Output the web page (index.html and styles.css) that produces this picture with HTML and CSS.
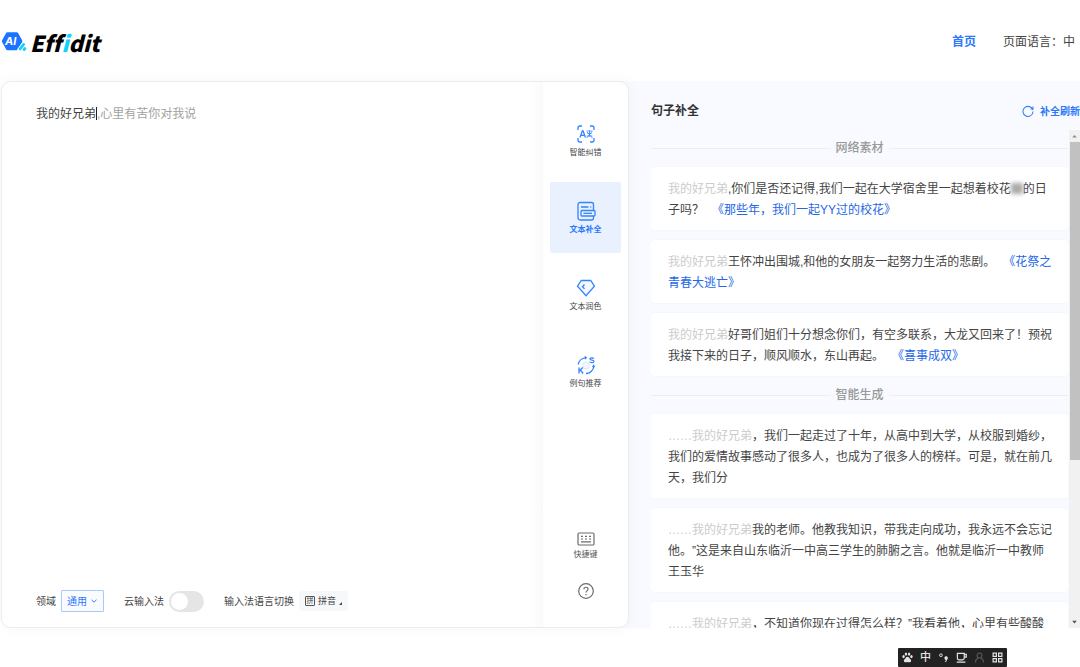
FILE: index.html
```html
<!DOCTYPE html>
<html lang="zh-CN">
<head>
<meta charset="utf-8">
<meta name="viewport" content="width=device-width, initial-scale=1">
<title>Effidit</title>
<link rel="stylesheet" href="styles.css">
</head>
<body>
<div class="page">
  <header class="topbar">
    <a class="brand" href="#" aria-label="Effidit">
      <svg class="brand-mark" viewBox="0 0 26 22" aria-hidden="true">
        <path d="M6.600 1.200h9q1 0 1.500.9l4 7.200q.5.9 0 1.800l-4 7.200q-.5.9-1.500.9h-9q-1 0-1.500-.9l-4-7.200q-.5-.9 0-1.800l4-7.200q.5-.9 1.500-.9z" fill="#1b74ff"/>
        <path d="M18.500 18.800l4.500-6" stroke="#fff" stroke-width="4.500" stroke-linecap="round"/>
        <path d="M19 18l3.600-4.600" stroke="#12d1fb" stroke-width="2.800" stroke-linecap="round"/>
        <path d="M23 18.500l.9-1" stroke="#12d1fb" stroke-width="2.800" stroke-linecap="round"/>
        <text class="brand-ai" x="4" y="14">AI</text>
      </svg>
      <span class="brand-name">Eff<span class="brand-i">i</span>dit</span>
    </a>
    <nav class="topnav">
      <a class="nav-home" href="#">首页</a>
      <a class="nav-lang" href="#">页面语言：中</a>
    </nav>
  </header>

  <main class="workspace">
    <section class="editor-card">
      <div class="editor">
        <div class="editor-text" role="textbox" aria-label="正文" aria-multiline="true" contenteditable="true" spellcheck="false">我的好兄弟<span class="caret"></span><span class="hint">,心里有苦你对我说</span></div>
        <div class="editor-options">
          <div class="option">
            <label for="domain">领域</label>
            <span class="select-wrap">
              <select id="domain"><option>通用</option></select>
              <svg class="chevron" viewBox="0 0 8 8" aria-hidden="true"><path d="M1.500 2.800L4 5.200l2.500-2.400" fill="none" stroke="#3c83f8"/></svg>
            </span>
          </div>
          <div class="option">
            <label for="cloud">云输入法</label>
            <input class="switch" id="cloud" type="checkbox" role="switch">
          </div>
          <div class="option">
            <label for="ime">输入法语言切换</label>
            <button class="ime-button" id="ime" type="button">
              <span class="ime-glyph">拼</span>拼音
              <svg class="corner" viewBox="0 0 4 4" aria-hidden="true"><path d="M4 0v4H0z" fill="#444"/></svg>
            </button>
          </div>
        </div>
      </div>

      <aside class="tools">
        <button class="tool" type="button">
          <svg class="tool-icon" viewBox="0 0 20 20" aria-hidden="true">
            <path d="M2 6V4q0-2 2-2h2M14 2h2q2 0 2 2v2M18 14v2q0 2-2 2h-2M6 18H4q-2 0-2-2v-2" class="stroke"/>
            <path d="M4 13.500l2.300-6.500h.8l2.300 6.500M5 11.300h3.500" class="stroke"/>
            <path d="M10.500 7h6M11.500 9.500h4M13.500 6.500v6M10.500 12h6M10.800 14l5.200-6.500M11 8l5.500 6" class="stroke thin"/>
          </svg>
          智能纠错
        </button>
        <button class="tool active" type="button">
          <svg class="tool-icon" viewBox="0 0 20 20" aria-hidden="true">
            <rect x="2" y="1.500" width="15.500" height="17.500" rx="2" class="stroke"/>
            <path d="M5 6h7.500M14.300 6h1" class="stroke"/>
            <rect x="5" y="9.500" width="14" height="5.500" rx="1" class="stroke filled"/>
            <path d="M7.500 12.300h8.500" class="stroke"/>
          </svg>
          文本补全
        </button>
        <button class="tool" type="button">
          <svg class="tool-icon" viewBox="0 0 20 20" aria-hidden="true">
            <path d="M5.300 2.500h9.400l3.800 5.700L10 17.800 1.500 8.200z" class="stroke soft"/>
            <path d="M8.500 6.500L6.500 8.700l2 2.200" class="stroke"/>
          </svg>
          文本润色
        </button>
        <button class="tool" type="button">
          <svg class="tool-icon" viewBox="0 0 20 20" aria-hidden="true">
            <circle cx="10" cy="10.500" r="3.500" fill="#f2f7ff" stroke="#d7e6ff"/>
            <path d="M2.200 9.500A8 8 0 0 1 9.500 2.800M17.800 11.500a8 8 0 0 1-7.800 7" class="stroke"/>
            <path d="M8.500.8l2.700 1.700-2 2.200zM15.800 12l2.100-2.700 1.300 3z" fill="#3483ff"/>
            <path d="M3 12.500v6M6.800 12.500L3.200 16M4.300 15l2.900 3.500" class="stroke"/>
            <path d="M17.800 3.700c-.3-1-3.800-1.300-3.800.3 0 1.500 4 .8 4 2.400 0 1.600-3.900 1.500-4.300.2" class="stroke"/>
          </svg>
          例句推荐
        </button>
        <div class="tools-foot">
          <button class="foot-tool" type="button">
            <svg class="foot-icon" viewBox="0 0 18 18" aria-hidden="true">
              <rect x="1" y="3" width="16" height="12" rx="1.300" class="stroke-gray"/>
              <path d="M4 6.300h2M8 6.300h2M12 6.300h2M4 9h2M8 9h2M12 9h2M4 11.900h10" class="stroke-gray"/>
            </svg>
            快捷键
          </button>
          <button class="foot-tool" type="button" aria-label="帮助">
            <svg class="foot-icon" viewBox="0 0 18 18" aria-hidden="true">
              <circle cx="9" cy="9" r="7.300" class="stroke-gray"/>
              <path d="M6.900 7.300c0-2.800 4.200-2.600 4.200-.2 0 1.500-2.100 1.600-2.100 3.400M9 12v1.300" class="stroke-gray"/>
            </svg>
          </button>
        </div>
      </aside>
    </section>

    <section class="results">
      <div class="results-head">
        <h2>句子补全</h2>
        <button class="refresh" type="button">
          <svg class="refresh-icon" viewBox="0 0 12 12" aria-hidden="true"><path d="M10.800 5A5 5 0 1 0 11 6.500M11 1.500V4H8.500" fill="none" stroke="#3c83f8" stroke-width="1.100"/></svg>
          补全刷新
        </button>
      </div>
      <div class="results-body">
        <div class="results-list">
          <h3 class="divider">网络素材</h3>
          <article class="card"><span class="prefix">我的好兄弟</span>,你们是否还记得,我们一起在大学宿舍里一起想着校花<span class="masked"></span>的日子吗？<a class="source" href="#">《那些年，我们一起YY过的校花》</a></article>
          <article class="card"><span class="prefix">我的好兄弟</span>王怀冲出围城,和他的女朋友一起努力生活的悲剧。<a class="source" href="#">《花祭之青春大逃亡》</a></article>
          <article class="card"><span class="prefix">我的好兄弟</span>好哥们姐们十分想念你们，有空多联系，大龙又回来了！预祝我接下来的日子，顺风顺水，东山再起。<a class="source" href="#">《喜事成双》</a></article>
          <h3 class="divider">智能生成</h3>
          <article class="card"><span class="prefix">……我的好兄弟</span>，我们一起走过了十年，从高中到大学，从校服到婚纱，我们的爱情故事感动了很多人，也成为了很多人的榜样。可是，就在前几天，我们分</article>
          <article class="card"><span class="prefix">……我的好兄弟</span>我的老师。他教我知识，带我走向成功，我永远不会忘记他。”这是来自山东临沂一中高三学生的肺腑之言。他就是临沂一中教师王玉华</article>
          <article class="card"><span class="prefix">……我的好兄弟</span>，不知道你现在过得怎么样？”我看着他，心里有些酸酸</article>
        </div>
        <div class="scrollbar" aria-hidden="true">
          <svg class="arrow" viewBox="0 0 12 12"><path d="M3.500 7.500L6 5l2.500 2.500z" fill="#8b8b8b"/></svg>
          <div class="track"><div class="thumb"></div></div>
          <svg class="arrow" viewBox="0 0 12 12"><path d="M3.500 4.500h5L6 7.500z" fill="#505050"/></svg>
        </div>
      </div>
    </section>
  </main>

  <div class="ime-bar">
    <svg viewBox="0 0 12 12" aria-hidden="true"><g fill="#e4e4e4"><ellipse cx="1.700" cy="5" rx="1.300" ry="1.700"/><ellipse cx="4.300" cy="2.300" rx="1.300" ry="1.800"/><ellipse cx="7.700" cy="2.300" rx="1.300" ry="1.800"/><ellipse cx="10.300" cy="5" rx="1.300" ry="1.700"/><path d="M6 5.200c1.500 0 2 1.600 3.200 2.700 2 2-.2 4.200-3.200 3.100-3 1.100-5.200-1.100-3.200-3.100C4 6.800 4.500 5.200 6 5.200z"/></g></svg>
    <span class="ime-mode">中</span>
    <svg viewBox="0 0 12 12" aria-hidden="true"><circle cx="3.200" cy="3.500" r="1.500" fill="none" stroke="#e4e4e4"/><path d="M7 6.800a1.900 1.900 0 1 1 3 1.300Q9.600 10.500 7.800 11.300l-.4-.7q1-.8 1.100-1.900-1.400-.4-1.500-1.900z" fill="#e4e4e4"/></svg>
    <svg viewBox="0 0 12 12" aria-hidden="true"><path d="M1.500 1.500h7.500v5q0 2-2 2H3.500q-2 0-2-2zM9 2.500h2.200v3H9M.8 11h9.500" fill="none" stroke="#e4e4e4" stroke-width="1.300"/></svg>
    <svg viewBox="0 0 12 12" aria-hidden="true"><path d="M6 6.500a2.700 2.700 0 1 1 .1 0M1.500 11.500q.3-4 3-4.900M10.500 11.500q-.3-4-3-4.900" fill="none" stroke="#5b5b5b" stroke-width="1.200"/></svg>
    <svg viewBox="0 0 12 12" aria-hidden="true"><path d="M1.200 1.200h3.600v3.600H1.200zM7.200 1.200h3.600v3.600H7.200zM1.200 7.200h3.600v3.600H1.200zM7.200 7.200h3.600v3.600H7.200z" fill="none" stroke="#e4e4e4" stroke-width="1.300"/></svg>
  </div>
</div>
</body>
</html>
```
FILE: styles.css
```css
* {
  box-sizing: border-box;
}

body {
  margin: 0;
  background: #fff;
  color: #444;
  font: 12px/21px "Liberation Sans", "Noto Sans CJK SC", sans-serif;
  text-spacing-trim: space-all;
}

a {
  color: inherit;
  text-decoration: none;
}

button,
select,
input {
  margin: 0;
  padding: 0;
  border: 0;
  background: none;
  color: inherit;
  font: inherit;
}

h2,
h3 {
  margin: 0;
  font-size: 12px;
}

.page {
  position: relative;
  display: flex;
  flex-direction: column;
  height: 100vh;
  padding-bottom: 39px;
  overflow: hidden;
}

/* Top bar */
.topbar {
  display: flex;
  flex: none;
  align-items: center;
  justify-content: space-between;
  height: 81px;
  padding: 2px 5px 0 1px;
}

.brand {
  display: flex;
  align-items: center;
  gap: 3px;
}

.brand-mark {
  width: 26px;
  height: 22px;
}

.brand-ai {
  fill: #fff;
  font: italic 700 11px Inter, sans-serif;
}

.brand-name {
  color: #000;
  font: italic 900 22px/28px "Noto Sans CJK SC", sans-serif;
  font-variant-ligatures: none;
}

.brand-i {
  color: #12d1fb;
}

.topnav {
  display: flex;
  gap: 27px;
  padding-top: 2px;
}

.nav-home {
  color: #2b78fb;
  font-weight: 700;
}

/* Workspace */
.workspace {
  display: grid;
  flex: 1;
  grid-template-columns: minmax(0, 629fr) minmax(0, 451fr);
  min-height: 0;
  background: linear-gradient(90deg, #fff 50%, #f8faff 50%);
}

.editor-card {
  display: flex;
  margin-left: 1px;
  border: 1px solid #ececee;
  border-radius: 10px;
  background: #fff;
  box-shadow: 0 0 16px rgba(40, 60, 110, 0.04);
}

.editor {
  display: flex;
  flex: 1;
  flex-direction: column;
  padding: 22px 0 15px 34px;
  border-radius: 10px 0 0 10px;
  background: linear-gradient(270deg, #fafafa, #fff 14px);
}

.editor-text {
  flex: 1;
  color: #444;
  outline: 0;
}

.caret {
  display: inline-block;
  width: 1px;
  height: 13px;
  background: #222;
  vertical-align: -2px;
}

.hint {
  color: #a2a2a2;
}

.editor-options {
  display: flex;
  align-items: center;
  gap: 20px;
  font-size: 10px;
}

.option {
  display: flex;
  align-items: center;
  gap: 5px;
}

.select-wrap {
  display: grid;
  align-items: center;
}

.select-wrap select,
.chevron {
  grid-area: 1 / 1;
}

.select-wrap select {
  width: 43px;
  height: 22px;
  padding-left: 5px;
  border: 1px solid #a9c9fc;
  border-radius: 1px;
  appearance: none;
  background: #f9fbff;
  color: #2b78fb;
}

.chevron {
  justify-self: end;
  width: 8px;
  height: 8px;
  margin-right: 6px;
  pointer-events: none;
}

.switch {
  display: flex;
  width: 35px;
  height: 21px;
  padding: 2px;
  border-radius: 11px;
  appearance: none;
  background: #e5e5e5;
}

.switch::before {
  width: 17px;
  height: 17px;
  border-radius: 50%;
  background: #fff;
  content: "";
}

.switch:checked {
  justify-content: flex-end;
  background: #2b78fb;
}

.ime-button {
  display: flex;
  align-items: center;
  gap: 3px;
  height: 20px;
  padding: 0 6px;
  border-radius: 2px;
  background: #f7f8fa;
  font-size: 9px;
}

.ime-glyph {
  width: 10px;
  height: 10px;
  border: 1px solid #555;
  border-radius: 1px;
  font-size: 7px;
  line-height: 8px;
}

.corner {
  width: 3px;
  height: 3px;
  margin-top: 5px;
}

/* Tool column */
.tools {
  display: flex;
  flex: none;
  flex-direction: column;
  align-items: center;
  gap: 6px;
  width: 85px;
  padding: 23px 0 27px;
}

.tool {
  display: flex;
  flex-direction: column;
  align-items: center;
  justify-content: center;
  gap: 2px;
  width: 71px;
  height: 71px;
  padding-top: 3px;
  border-radius: 2px;
  font-size: 8px;
  line-height: 14px;
}

.tool.active {
  background: #e9f0fe;
  color: #2b78fb;
  font-weight: 700;
}

.tool-icon {
  width: 20px;
  height: 20px;
}

.stroke {
  fill: none;
  stroke: #3483ff;
  stroke-width: 1.3;
}

.filled {
  fill: #e9f0fe;
}

.thin {
  stroke-width: 0.8;
}

.soft {
  fill: #f4f8ff;
}

.tools-foot {
  display: flex;
  flex-direction: column;
  align-items: center;
  gap: 20px;
  margin-top: auto;
}

.foot-tool {
  display: flex;
  flex-direction: column;
  align-items: center;
  color: #555;
  font-size: 8px;
  line-height: 14px;
}

.foot-icon {
  width: 18px;
  height: 18px;
}

.stroke-gray {
  fill: none;
  stroke: #6c6c6c;
  stroke-width: 1.2;
}

/* Results */
.results {
  display: flex;
  flex-direction: column;
  min-height: 0;
  padding-left: 22px;
}

.results-head {
  display: flex;
  flex: none;
  align-items: center;
  justify-content: space-between;
  height: 49px;
  padding-top: 11px;
}

.results-head h2 {
  color: #333;
}

.refresh {
  display: flex;
  align-items: center;
  gap: 6px;
  color: #2b78fb;
  font-size: 10px;
  font-weight: 700;
}

.refresh-icon {
  width: 12px;
  height: 12px;
}

.results-body {
  display: flex;
  flex: 1;
  gap: 1px;
  min-height: 0;
}

.results-list {
  display: flex;
  flex: 1;
  flex-direction: column;
  gap: 10px;
  padding-top: 9px;
  overflow: hidden;
}

.divider {
  display: flex;
  flex: none;
  align-items: center;
  gap: 5px;
  height: 18px;
  color: #999;
  font-weight: 500;
}

.divider::before,
.divider::after {
  flex: 1;
  height: 1px;
  background: #ebedf2;
  content: "";
}

.card {
  flex: none;
  padding: 12px 14px 9px 17px;
  border-radius: 4px;
  background: #fff;
  box-shadow: 0 0 2px rgba(40, 60, 110, 0.05);
}

.prefix {
  color: #ccc;
}

.source {
  margin-left: 8px;
  color: #2468e8;
}

.masked {
  display: inline-block;
  width: 12px;
  height: 11px;
  background: #aaa;
  filter: blur(2px);
  vertical-align: -1px;
}

.scrollbar {
  display: flex;
  flex: none;
  flex-direction: column;
  width: 11px;
  background: #f1f1f1;
}

.arrow {
  width: 11px;
  height: 12px;
}

.track {
  flex: 1;
  padding-left: 1px;
}

.thumb {
  height: 67%;
  background: #c1c1c1;
}

/* Floating input-method bar */
.ime-bar {
  position: absolute;
  right: 73px;
  bottom: 0;
  display: flex;
  align-items: center;
  justify-content: space-between;
  width: 109px;
  height: 19px;
  padding: 0 4px;
  border-radius: 1px;
  background: #222;
  color: #e4e4e4;
}

.ime-bar svg {
  width: 11px;
  height: 11px;
}

.ime-mode {
  font-size: 11px;
  font-weight: 500;
  line-height: 19px;
}
```
